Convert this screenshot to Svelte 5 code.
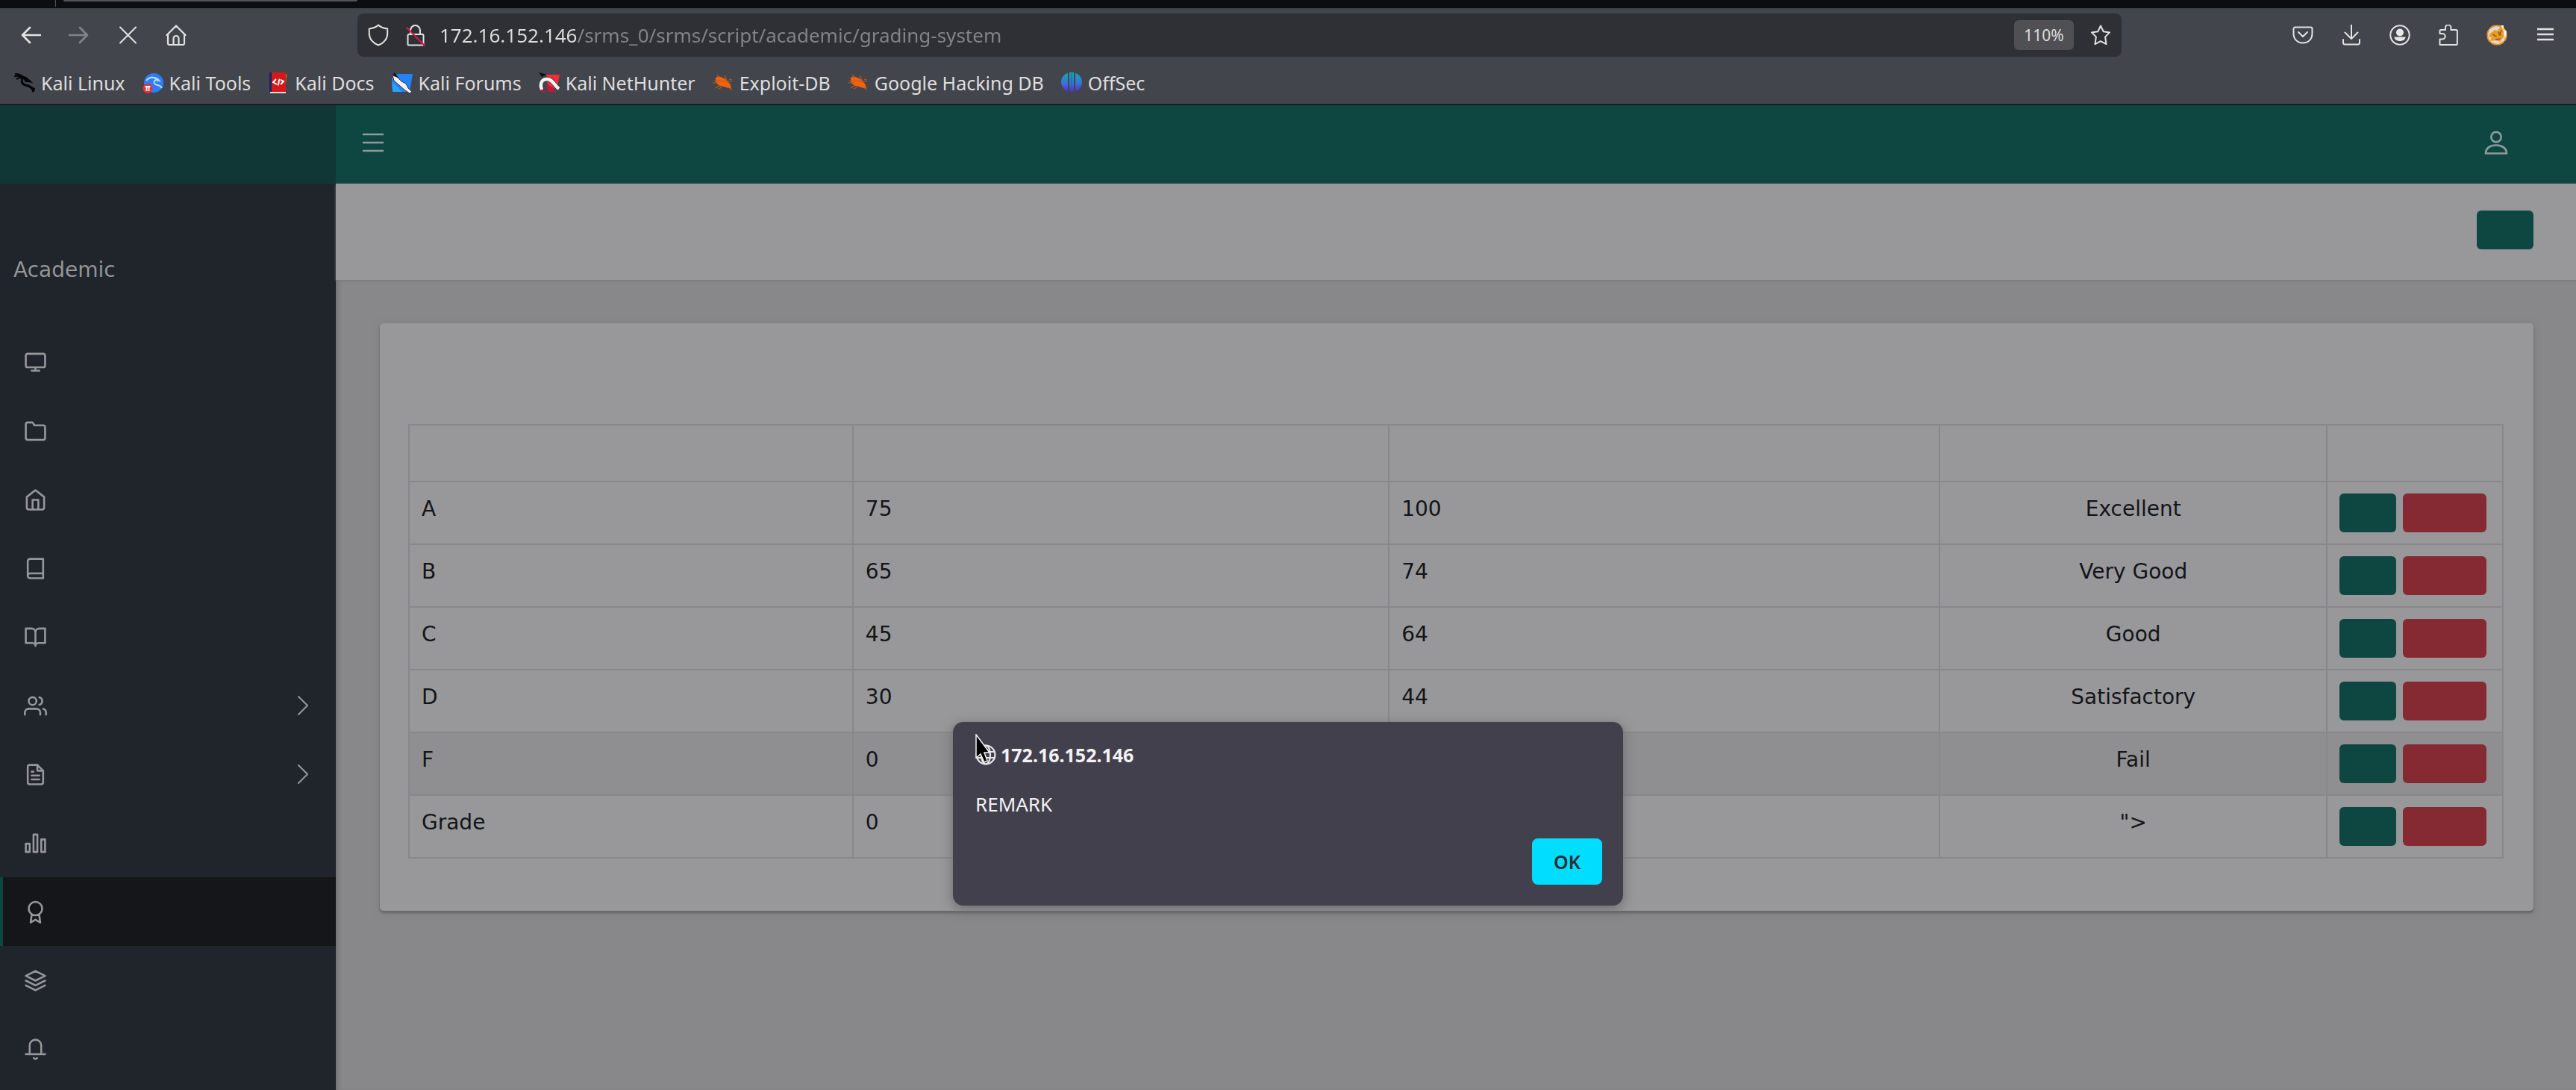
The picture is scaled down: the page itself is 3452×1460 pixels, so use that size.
<script>
  const host = '172.16.152.146';
  let url = $state(host + '/srms_0/srms/script/academic/grading-system');

  const bookmarks = [
    { name: 'Kali Linux', icon: 'dragon' },
    { name: 'Kali Tools', icon: 'tools' },
    { name: 'Kali Docs', icon: 'docs' },
    { name: 'Kali Forums', icon: 'forums' },
    { name: 'Kali NetHunter', icon: 'nethunter' },
    { name: 'Exploit-DB', icon: 'bug' },
    { name: 'Google Hacking DB', icon: 'bug' },
    { name: 'OffSec', icon: 'offsec' }
  ];

  const menu = [
    { id: 'dashboard', d: 'M4 3h16a2 2 0 0 1 2 2v10a2 2 0 0 1-2 2H4a2 2 0 0 1-2-2V5a2 2 0 0 1 2-2zM8 20.500h8M12 17v3.500' },
    { id: 'terms', d: 'M22 19a2 2 0 0 1-2 2H4a2 2 0 0 1-2-2V5a2 2 0 0 1 2-2h5l2 3h9a2 2 0 0 1 2 2z' },
    { id: 'classes', d: 'M3 9l9-7 9 7v11a2 2 0 0 1-2 2H5a2 2 0 0 1-2-2zM9 22V12h6v10' },
    { id: 'subjects', d: 'M4 19.500A2.500 2.500 0 0 1 6.500 17H20M6.500 2H20v20H6.500A2.500 2.500 0 0 1 4 19.500v-15A2.500 2.500 0 0 1 6.500 2z' },
    { id: 'combinations', d: 'M2 3h6a4 4 0 0 1 4 4v14a3 3 0 0 0-3-3H2zM22 3h-6a4 4 0 0 0-4 4v14a3 3 0 0 1 3-3h7z' },
    { id: 'students', more: true, d: 'M17 21v-2a4 4 0 0 0-4-4H5a4 4 0 0 0-4 4v2M9 3a4 4 0 1 0 0 8a4 4 0 1 0 0-8M23 21v-2a4 4 0 0 0-3-3.870M16 3.130a4 4 0 0 1 0 7.750' },
    { id: 'results', more: true, d: 'M14 2H6a2 2 0 0 0-2 2v16a2 2 0 0 0 2 2h12a2 2 0 0 0 2-2V8zM14 2v6h6M16 13H8M16 17H8M10 9H8' },
    { id: 'reports', d: 'M2 12.500h4V21H2zM10 3h4v18h-4zM18 8h4v13h-4z' },
    { id: 'grading', active: true, d: 'M12 1.500a7 7 0 1 0 0 14a7 7 0 1 0 0-14M8.200 14.500L7 23l5-3 5 3-1.200-8.500' },
    { id: 'divisions', d: 'M12 2L2 7l10 5 10-5zM2 17l10 5 10-5M2 12l10 5 10-5' },
    { id: 'announcements', d: 'M18 8A6 6 0 0 0 6 8v9H2h20h-4zM13.730 21a2 2 0 0 1-3.460 0' }
  ];

  const grades = [
    { name: 'A', min: 75, max: 100, remark: 'Excellent' },
    { name: 'B', min: 65, max: 74, remark: 'Very Good' },
    { name: 'C', min: 45, max: 64, remark: 'Good' },
    { name: 'D', min: 30, max: 44, remark: 'Satisfactory' },
    { name: 'F', min: 0, max: 29, remark: 'Fail', hover: true },
    { name: 'Grade', min: 0, max: 0, remark: '">' }
  ];
</script>

<div class="browser">
  <div class="tabstrip"><span class="separator"></span><span class="tab"></span></div>

  <div class="chrome">
    <div class="navbar">
      <div class="navbuttons">
        <button aria-label="Back"><svg viewBox="0 0 28 28"><path d="M27 14H3M13 4L3 14l10 10" stroke-width="2.600" /></svg></button>
        <button aria-label="Forward" class="dim"><svg viewBox="0 0 28 28"><path d="M1 14h24M15 4l10 10-10 10" stroke-width="2.600" /></svg></button>
        <button aria-label="Stop"><svg viewBox="0 0 28 28"><path d="M4 3.500l21 21M25 3.500L4 24.500" stroke-width="2" /></svg></button>
        <button aria-label="Home"><svg viewBox="0 0 28 28"><path d="M1.500 14L14 1.500 26.500 14M3 12.500V25a2 2 0 0 0 2 2h18a2 2 0 0 0 2-2V12.500M10.500 27v-8.500a3.500 3.500 0 0 1 7 0V27" stroke-width="2.200" /></svg></button>
      </div>
      <div class="urlbar">
        <svg class="shield" viewBox="0 0 28 30"><path d="M14 1.500C10.500 5 6 6 1.800 6.500V13c0 7 5 13 12.200 15.500C21.200 26 26.200 20 26.200 13V6.500C22 6 17.500 5 14 1.500z" /></svg>
        <svg class="lock" viewBox="0 0 28 30"><path d="M7 14V9a6.500 7 0 0 1 13 0v5M5 14h18a1.500 1.500 0 0 1 1.500 1.500V27a1.500 1.500 0 0 1-1.500 1.500H5A1.500 1.500 0 0 1 3.500 27V15.500A1.500 1.500 0 0 1 5 14z" /><path class="strike" d="M2 5l24 24" /></svg>
        <input class="address" type="text" aria-label="Address" bind:value={url} />
        <button class="zoom">110%</button>
        <button class="star" aria-label="Bookmark this page"><svg viewBox="0 0 28 30"><path d="M14 2.500l3.700 7.700 8.400 1.200-6 6 1.400 9.800L14 23.200 6.500 27.200l1.400-9.800-6-6 8.400-1.200z" /></svg></button>
      </div>
      <div class="tools">
        <button aria-label="Pocket"><svg viewBox="0 0 28 28"><path d="M3.500 3.500h21a2 2 0 0 1 2 2V12c0 7-5 12.500-12.500 12.500S1.500 19 1.500 12V5.500a2 2 0 0 1 2-2zM8 10l6 6 6-6" /></svg></button>
        <button aria-label="Downloads"><svg viewBox="0 0 28 28"><path d="M14 0v19M5.500 10.500L14 19l8.500-8.500M3 20v4a2.500 2.500 0 0 0 2.500 2.500h17A2.500 2.500 0 0 0 25 24v-4" /></svg></button>
        <button aria-label="Account"><svg viewBox="0 0 28 28"><circle cx="14" cy="14" r="12.700" /><circle class="solid" cx="14" cy="10.500" r="5" /><path class="solid" d="M6.500 16.500h15c0 3-3 5.500-7.500 5.500s-7.500-2.500-7.500-5.500z" /></svg></button>
        <button aria-label="Extensions"><svg viewBox="0 0 28 28"><path d="M2.500 27V19.500h3.500a3.500 3.500 0 0 0 0-7.500H2.500V8.500a1.500 1.500 0 0 1 1.500-1.500h6V4a3.700 3.700 0 0 1 7.400 0v3h7a1.500 1.500 0 0 1 1.500 1.500V25.500a1.500 1.500 0 0 1-1.500 1.500z" /></svg></button>
        <button aria-label="FoxyProxy">
          <svg viewBox="0 0 28 28">
            <circle cx="14" cy="14" r="12.800" fill="#d9dadb" stroke="#f09010" stroke-width="2" stroke-dasharray="7 3" />
            <path d="M4 13l7-6 4 1 5-7 3 9 1 5-6 8-5-2-8 1 2-5-4-1z" fill="#ef9a22" stroke="none" />
            <path d="M9 13l4 3M16 10l3 4M13 20l5-1M20 8l-3 6" stroke="#8a5a1c" stroke-width="1.500" />
            <path d="M19 1h4v5l4 3-1 8-3-3 1-6z" fill="#f4f4f4" stroke="none" />
          </svg>
        </button>
        <button aria-label="Menu"><svg viewBox="0 0 28 28"><path d="M3 6h22M3 13h22M3 20h22" stroke-width="2.400" stroke-linecap="butt" /></svg></button>
      </div>
    </div>

    <nav class="bookmarks" aria-label="Bookmarks">
      {#each bookmarks as b}
        <a href="#{b.icon}">
          <svg viewBox="0 0 28 28">
            {#if b.icon === 'dragon'}
              <path d="M1 2c5 0 8 1 11 4M0 5c5-1 8 0 12 2M3 9c3-2 6-2 9-2" fill="none" stroke="#050608" stroke-width="2.200" />
              <path d="M10 4l6 2 5 4 5 5c-4-2-8-2-11-2" fill="#050608" />
              <path d="M13 6c-4 4-4 9 2 11 5 1 9 2 11 9M20 19l8 4" fill="none" stroke="#050608" stroke-width="3" />
            {:else if b.icon === 'tools'}
              <circle cx="15" cy="14" r="13" fill="#2d7df6" />
              <path d="M5 11c5-6 12-5 17-1M8 8c5-3 9-1 13 4M24 12c-7-4-11 0-7 4 4 1 7 1 9 5" fill="none" stroke="#b9d8ff" stroke-width="2" />
              <circle cx="7" cy="21.500" r="6.500" fill="#ec2c37" />
              <path d="M3.500 19h7M5.500 19v6M8.500 19v6" stroke="#fff" stroke-width="1.800" />
            {:else if b.icon === 'docs'}
              <path d="M2 0h4v26H2z" fill="#17265e" /><path d="M5 0h19v26H5z" fill="#d81718" /><path d="M24 2v5h1V2z" fill="#d98a1d" /><path d="M24 8v5h1V8z" fill="#3c8a45" />
              <path d="M3 26h21v2H3z" fill="#dcdcdc" /><path d="M11 9l-4 4 5 3M13 17c3-1 0-6 3-8M17 10l4 2-4 4" fill="none" stroke="#fff" stroke-width="2" />
            {:else if b.icon === 'forums'}
              <path d="M8 2h20l-4 24H2L0 8z" fill="#2481f8" /><path d="M0 12l14 14H1z" fill="#27a0ff" />
              <path d="M1 4l6 2 6 6 6 3 3 6 5 5-3 2-6-4-7-6-8-7z" fill="#f2f2f2" stroke="#35383d" stroke-width="1" /><path d="M3 0l7 8-8-4z" fill="#111" />
            {:else if b.icon === 'nethunter'}
              <path d="M10 3h18l-4 20-12-6z" fill="#f22d35" /><path d="M0 0l11 3-7 3z" fill="#111" />
              <path d="M10 14l14 12H12z" fill="#c5163d" /><path d="M1 20l8 6H3z" fill="#c5163d" />
              <path d="M4 23C1 15 4 9 11 9c8 0 9 8 16 13" fill="none" stroke="#35383d" stroke-width="6" />
              <path d="M4 23C1 15 4 9 11 9c8 0 9 8 16 13" fill="none" stroke="#f4f4f4" stroke-width="4.500" />
            {:else if b.icon === 'bug'}
              <path d="M4 7l4-2 5 2 4 2 6 6 2 6-4 0-6-2-6-1-5-5z" fill="#f2620d" />
              <path d="M2 11l24 1M6 3l3 5M0 14l8 0M4 21l6-4M16 4l3 7M22 9l4 1M12 20l-4 2M21 20l5 3" stroke="#b75a25" stroke-width="1.200" />
            {:else}
              <defs><linearGradient id="offsec" x1="0" y1="0" x2="0" y2="1"><stop offset="0" stop-color="#12a8b8" /><stop offset="0.550" stop-color="#3c6fd8" /><stop offset="1" stop-color="#5a1fc0" /></linearGradient></defs>
              <path d="M9 1v25C3 23 0 18 0 13 0 7 4 2 9 1zM19 1v25c6-3 9-8 9-13 0-6-4-11-9-12zM11 0h6v23l-3 5-3-5z" fill="url(#offsec)" /><path d="M14 1v21" stroke="#275f8c" stroke-width="1" />
            {/if}
          </svg>
          <span>{b.name}</span>
        </a>
      {/each}
    </nav>
  </div>

  <div class="page">
    <aside>
      <div class="brand"></div>
      <p class="role">Academic</p>
      <ul>
        {#each menu as item}
          <li>
            <a href="#{item.id}" class:active={item.active} aria-label={item.id}>
              <svg class="glyph" viewBox="0 0 24 24"><path d={item.d} /></svg>
              {#if item.more}<svg class="chevron" viewBox="0 0 14 26"><path d="M1 1l12 12L1 25" /></svg>{/if}
            </a>
          </li>
        {/each}
      </ul>
    </aside>

    <div class="content">
      <header>
        <button aria-label="Toggle sidebar"><svg class="burger" viewBox="0 0 28 26"><path d="M0 2h28M0 13h28M0 24h28" /></svg></button>
        <button aria-label="Profile"><svg class="user" viewBox="0 0 32 32"><circle cx="16" cy="8.500" r="6.700" /><path d="M2 30.500c0-7 6-11 14-11s14 4 14 11z" /></svg></button>
      </header>
      <div class="titlebar"><button class="btn teal" aria-label="Add"></button></div>
      <main>
        <section class="card">
          <table>
            <colgroup><col class="c-name" /><col class="c-min" /><col class="c-max" /><col class="c-remark" /><col class="c-actions" /></colgroup>
            <thead><tr><th></th><th></th><th></th><th></th><th></th></tr></thead>
            <tbody>
              {#each grades as g}
                <tr class:hover={g.hover}>
                  <td>{g.name}</td>
                  <td>{g.min}</td>
                  <td>{g.max}</td>
                  <td class="center">{g.remark}</td>
                  <td>
                    <div class="actions">
                      <button class="btn teal" aria-label="Edit {g.name}"></button>
                      <button class="btn red" aria-label="Delete {g.name}"></button>
                    </div>
                  </td>
                </tr>
              {/each}
            </tbody>
          </table>
        </section>
      </main>
    </div>
  </div>

  <dialog open>
    <h1>
      <svg viewBox="0 0 28 28"><circle cx="14" cy="14" r="12.500" /><ellipse cx="14" cy="14" rx="6" ry="12.500" /><path d="M2 10h24M2 18h24" /></svg>
      <span>{host}</span>
    </h1>
    <p>REMARK</p>
    <div class="buttons"><button>OK</button></div>
    <svg class="cursor" viewBox="0 0 20 40"><path d="M1 1v31l6-5 5 11 4-2-4-11h7z" /></svg>
  </dialog>
</div>

<style>
  :global(body) { background: #88888a; }
  * { box-sizing: border-box; }
  button { border: 0; padding: 0; margin: 0; background: none; color: inherit; font: inherit; }
  svg { display: block; flex: none; }

  .browser {
    position: relative;
    display: flex;
    flex-direction: column;
    min-height: 100vh;
    font-family: "Noto Sans", sans-serif;
    font-size: 25px;
    line-height: 34px;
  }

  .tabstrip { display: flex; gap: 10px; height: 11px; padding-left: 74px; background: #0c0d11; }
  .separator { width: 1px; height: 9px; background: #55565c; }
  .tab { width: 394px; height: 2px; background: #50525a; border-radius: 0 0 4px 4px; }

  .chrome { background: #43454d; border-bottom: 2px solid #1b1c22; color: #dededd; }
  .navbar { display: flex; align-items: center; padding: 7px 27px 4px 27px; }
  .navbuttons { display: flex; gap: 37px; margin-right: 229px; }
  .navbuttons svg, .tools svg { width: 28px; height: 28px; }
  .navbar svg { fill: none; stroke: #e2e2e1; stroke-width: 2; stroke-linecap: round; stroke-linejoin: round; }
  .navbar .solid { fill: #e8e8e7; stroke: none; }
  .dim { opacity: 0.4; }
  .tools { display: flex; gap: 37px; margin-left: 229px; }

  .urlbar {
    display: flex;
    align-items: center;
    flex: 1;
    height: 58px;
    padding: 0 14px;
    background: #2f3035;
    border-radius: 8px;
  }
  .urlbar svg { width: 28px; height: 30px; }
  .shield { margin-right: 22px; }
  .lock { margin-right: 18px; }
  .navbar .strike { stroke: #d3174a; stroke-width: 2.2; }
  .address {
    flex: 1;
    min-width: 0;
    padding: 0;
    border: 0;
    outline: 0;
    font: inherit;
    font-size: 26px;
    line-height: 40px;
    color: transparent;
    background: linear-gradient(to right, #dededd 185px, #838488 185px);
    -webkit-background-clip: text;
    background-clip: text;
  }
  .zoom { width: 80px; height: 40px; margin-right: 22px; border-radius: 6px; background: #504f54; font-size: 21px; }

  .bookmarks { display: flex; gap: 23px; padding: 14px 19px 11px; }
  .bookmarks a { display: flex; align-items: center; gap: 8px; color: #dededd; text-decoration: none; }
  .bookmarks svg { width: 28px; height: 28px; }

  .page { display: flex; flex: 1; font-family: "DejaVu Sans", sans-serif; font-size: 28px; line-height: 42px; }

  aside { width: 450px; flex: none; background: #20242b; color: #939598; }
  .brand { height: 105px; background: #103735; }
  .role { margin: 95px 18px 56px; }
  ul { list-style: none; margin: 0; padding: 0; }
  aside a { display: flex; align-items: center; justify-content: space-between; height: 92px; padding: 0 37px 0 28px; border-left: 4px solid transparent; }
  aside a.active { background: #15161a; border-left-color: #0e4642; }
  aside svg { fill: none; stroke: #96979a; stroke-linecap: round; stroke-linejoin: round; }
  .glyph { width: 31px; height: 31px; stroke-width: 2; }
  .chevron { width: 14px; height: 26px; stroke-width: 2; }

  .content { display: flex; flex-direction: column; flex: 1; min-width: 0; background: #88888a; box-shadow: inset 6px 0 6px -4px #6c6c70; }
  header { display: flex; align-items: center; justify-content: space-between; height: 105px; padding: 0 91px 6px 36px; background: #0e4642; }
  header svg { fill: none; stroke: #8e9c9b; stroke-width: 2.6; }
  .burger { width: 28px; height: 26px; }
  .user { width: 32px; height: 32px; }
  .titlebar { display: flex; align-items: center; justify-content: flex-end; height: 129px; padding: 0 57px 6px; background: #98989a; box-shadow: 0 1px 3px #78787c; }

  .btn { width: 76px; height: 52px; border-radius: 6px; }
  .teal { background: #0e4642; }
  .red { width: 112px; background: #852933; }

  main { padding: 58px 57px 58px 59px; }
  .card { padding: 135px 40px 70px 38px; background: #98989a; border-radius: 5px; box-shadow: 0 3px 3px #66666a, 0 2px 10px #7b7b7e; }
  table { width: 100%; border-collapse: collapse; table-layout: fixed; color: #141518; }
  .c-name { width: 21.2%; }
  .c-min { width: 25.6%; }
  .c-max { width: 26.3%; }
  .c-remark { width: 18.5%; }
  .c-actions { width: 8.4%; }
  th, td { border: 2px solid #88888c; padding: 15px 16px; vertical-align: top; text-align: left; }
  th { height: 76px; }
  td.center { text-align: center; }
  tr.hover { background: #8f8f91; }
  .actions { display: flex; gap: 9px; }

  dialog {
    position: absolute;
    top: 967px;
    left: 0;
    right: 0;
    width: 898px;
    margin: 0 auto;
    padding: 26px 28px 28px 30px;
    border: 0;
    border-radius: 14px;
    background: #43404d;
    color: #f2f2f4;
    box-shadow: 0 4px 16px #6a6a6e;
  }
  h1 { display: flex; align-items: center; gap: 6px; margin: 0; font-size: 25px; line-height: 36px; font-weight: 700; }
  h1 svg { width: 28px; height: 28px; fill: none; stroke: #e6e6e8; stroke-width: 2.2; }
  dialog p { margin: 30px 0 28px; font-size: 26px; line-height: 36px; }
  .buttons { display: flex; justify-content: flex-end; }
  .buttons button { width: 94px; height: 62px; border-radius: 8px; background: #00ddff; color: #2b2a33; font-weight: 600; }
  .cursor { position: absolute; left: 30px; top: 16px; width: 20px; height: 40px; fill: #000; stroke: #f4f4f4; stroke-width: 1.5; }
</style>
